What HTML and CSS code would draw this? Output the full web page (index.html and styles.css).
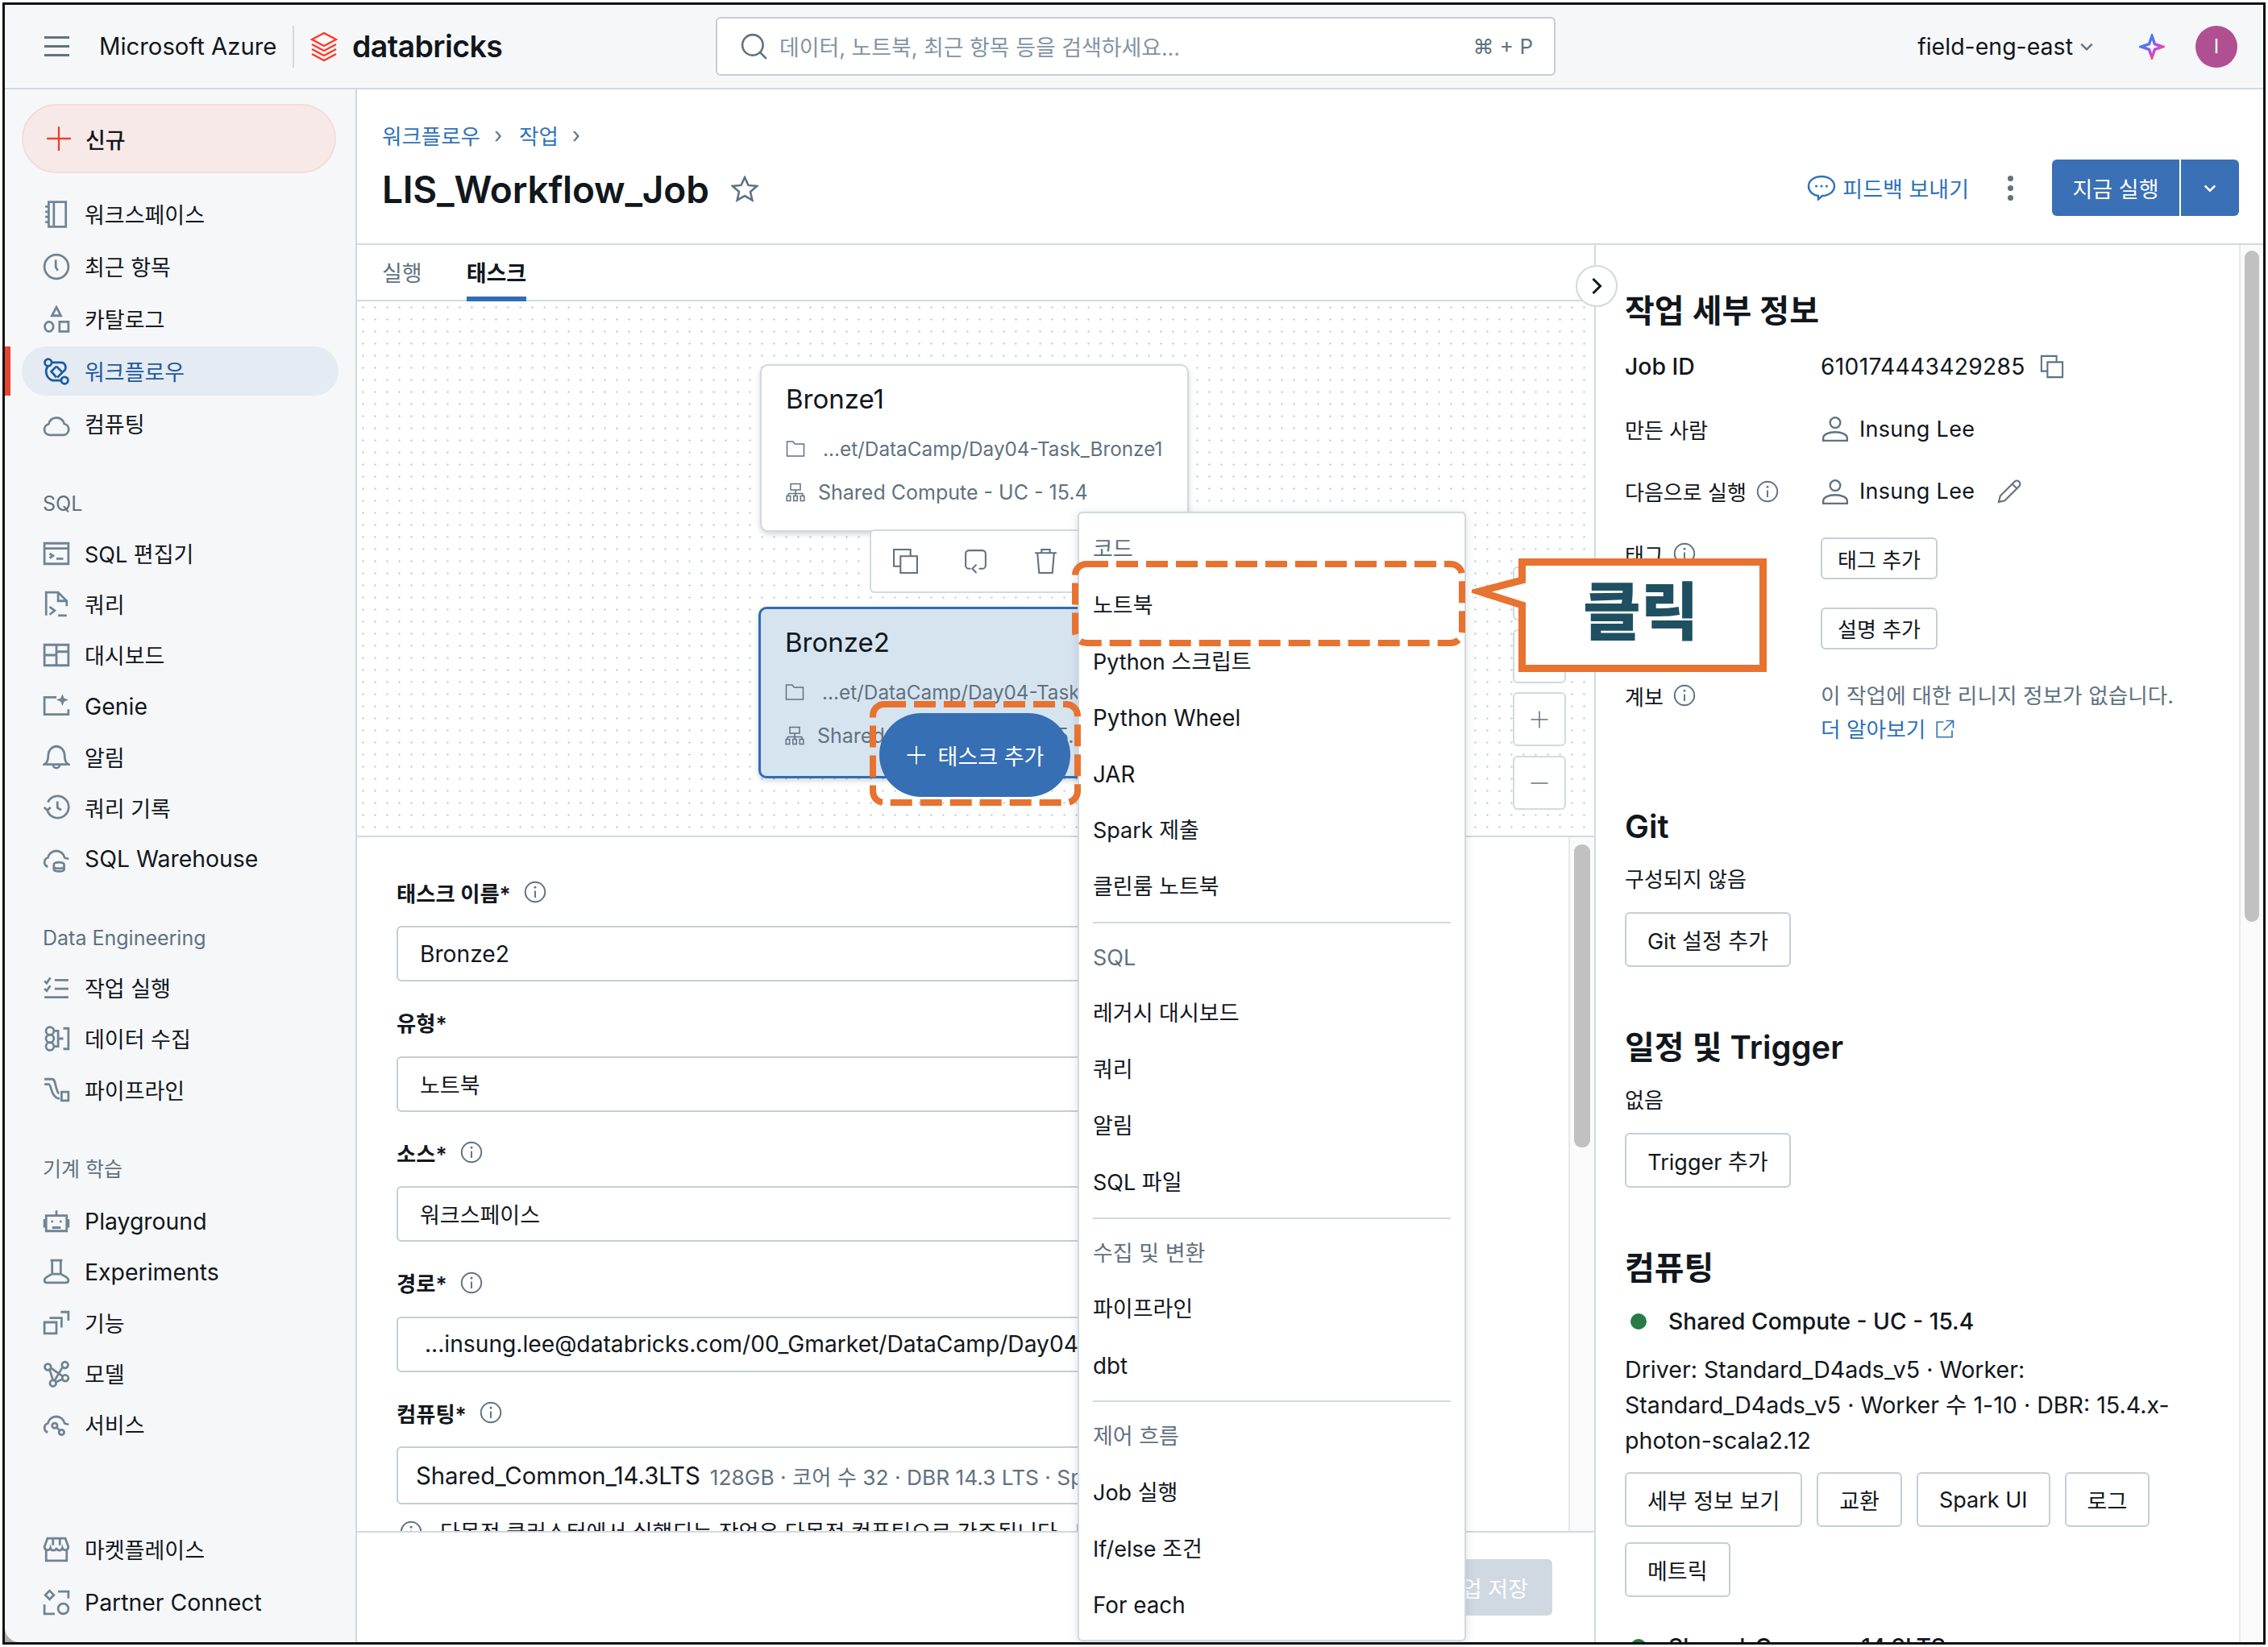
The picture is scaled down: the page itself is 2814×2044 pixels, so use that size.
FILE: index.html
```html
<!DOCTYPE html>
<html lang="ko">
  <head>
    <meta charset="UTF-8" />
    <title>LIS_Workflow_Job - Databricks</title>
    <link rel="stylesheet" href="styles.css">
  </head>
  <body>
    <svg class="sprite" width="0" height="0">
      <symbol id="i-workspace" viewBox="0 0 16 16"><path d="M3.5.8h10v14.4h-10zM6.5.8v14.4M1.5 3.5h2M1.5 6.5h2M1.5 9.5h2M1.5 12.5h2"/></symbol>
      <symbol id="i-clock" viewBox="0 0 16 16"><circle cx="8" cy="8" r="7"/><path d="M7.6 4v4.2l1.2 2"/></symbol>
      <symbol id="i-catalog" viewBox="0 0 16 16"><path d="M8 1l2.6 5H5.4zM9.8 9.6h5.2v5.6H9.800zM6.200 12.400a2.500 2.800 0 1 1-5 0a2.500 2.800 0 1 1 5 0z"/></symbol>
      <symbol id="i-flow" viewBox="0 0 16 16"><circle cx="3.200" cy="2.800" r="2"/><circle cx="12.800" cy="13.200" r="2"/><path d="M5.200 2.800H10.500a2.800 2.800 0 0 1 1.500 5.200L8.500 11.500M3.200 4.800C1.200 7 1.500 11.500 5.500 13.200H10.800M8 5l3 3M8 5L5 8l3 3.500"/></symbol>
      <symbol id="i-cloud" viewBox="0 0 16 16"><path d="M4 14.500a3.200 3.200 0 0 1-.6-6.300A4.700 4.700 0 0 1 12.600 8a3.300 3.300 0 0 1-.4 6.500z"/></symbol>
      <symbol id="i-editor" viewBox="0 0 16 16"><path d="M1 2h14v12H1zM1 5h14M4 8l2 1.300-2 1.300M8 11h4"/></symbol>
      <symbol id="i-query" viewBox="0 0 16 16"><path d="M2 14.500V1h7l5 5v3M9 1v5h5M4 9.500l3 2.200-3 2.300M9 14.500h5"/></symbol>
      <symbol id="i-dash" viewBox="0 0 16 16"><path d="M1 2h14v12H1zM8 2v12M1 8h7M8 6h7"/></symbol>
      <symbol id="i-genie" viewBox="0 0 16 16"><path d="M8 3H1v10h14v-3"/><path class="solid" d="M11.500 1l1 2.500 2.500 1-2.500 1-1 2.500-1-2.500-2.500-1 2.500-1z"/></symbol>
      <symbol id="i-bell" viewBox="0 0 16 16"><path d="M1 12.500c1.800-1 2.200-3 2.200-5a4.800 5.500 0 0 1 9.600 0c0 2 .4 4 2.200 5zM6 12.500a2 2.200 0 0 0 4 0"/></symbol>
      <symbol id="i-history" viewBox="0 0 16 16"><path d="M3 5a6.400 6.400 0 1 1-.4 4.500M.8 8l1.900 1.700L4.600 8M8.600 4.500v3.700l2.200 1.300"/></symbol>
      <symbol id="i-warehouse" viewBox="0 0 16 16"><path d="M3 12.500A2.700 2.700 0 0 1 3 7.300 5 5 0 0 1 12.800 7.300l2.400.7M6.500 11.400c0-2 6-2 6 0v2.600c0 1.700-6 1.700-6 0zM6.500 12.800c1 1 5 1 6 0"/></symbol>
      <symbol id="i-runs" viewBox="0 0 16 16"><path d="M1 4l1.300 1.200L4.500 2M1 8.500l1.300 1.200 2.200-3M7 3.500h8M7 8.500h8M1 13.500h14"/></symbol>
      <symbol id="i-ingest" viewBox="0 0 16 16"><circle cx="4.200" cy="3.500" r="2.300"/><circle cx="4.200" cy="8" r="2.300"/><circle cx="4.200" cy="12.500" r="2.300"/><path d="M6.500 3.500H9v9H6.500M9 8h3M12 2h3v12h-3"/></symbol>
      <symbol id="i-pipe" viewBox="0 0 16 16"><path d="M1 2h4.500c2.500 0 1.500 6 4 8.500M1 5h2.500c1 0 1.200 3 2.500 5.500 1 1.800 2 2.800 4 2.800M11 9.500h4v5h-4z"/></symbol>
      <symbol id="i-robot" viewBox="0 0 16 16"><path d="M2 5h12v9H2zM8 2v3M1 7v5M15 7v5M5.500 12h5"/><circle class="solid" cx="5.500" cy="8.500" r=".7"/><circle class="solid" cx="10.500" cy="8.500" r=".7"/></symbol>
      <symbol id="i-flask" viewBox="0 0 16 16"><path d="M4.500 1.500h7M5.500 1.500v7.500c0 1-4.500 2-4.500 4 0 1 .5 1.500 1.500 1.500h11c1 0 1.500-.5 1.500-1.500 0-2-4.500-3-4.500-4V1.500M5.500 9.500h5"/></symbol>
      <symbol id="i-feature" viewBox="0 0 16 16"><path d="M1 8h7v6.500H1zM4 5.500h7V11M10.500 2H15v5"/></symbol>
      <symbol id="i-model" viewBox="0 0 16 16"><circle cx="3" cy="4" r="1.800"/><circle cx="13" cy="2.800" r="1.800"/><circle cx="13.200" cy="10.500" r="1.800"/><circle cx="6" cy="13.500" r="1.800"/><path d="M4.700 4.500l7 5M4 5.500l2 6.200M11.800 3.700l-5 8.400M7.700 12.800l3.900-1.700"/></symbol>
      <symbol id="i-service" viewBox="0 0 16 16"><path d="M3 12.500A2.700 2.700 0 0 1 3 7.300 5 5 0 0 1 12.800 7.300l2.400.7"/><circle cx="7" cy="8.600" r="1.500"/><circle cx="11" cy="12.500" r="1.500"/><path d="M8.200 9.700l1.700 1.700"/></symbol>
      <symbol id="i-market" viewBox="0 0 16 16"><path d="M2 8v6.500h12V8M1 6.500L2.800 1.500h10.400L15 6.500a1.800 1.800 0 0 1-3.500.6 1.800 1.800 0 0 1-3.500 0 1.800 1.800 0 0 1-3.500 0A1.800 1.800 0 0 1 1 6.500zM6 1.500v4M10 1.500v4"/></symbol>
      <symbol id="i-partner" viewBox="0 0 16 16"><path d="M4 1l2.500 2.500L4 6 1.500 3.500zM9 1.500h6v4M1 9v5.500h6"/><circle cx="12" cy="11.500" r="3"/></symbol>
      <symbol id="i-folder" viewBox="0 0 16 16"><path d="M1 2h5l1.500 2H15v10H1z"/></symbol>
      <symbol id="i-cluster" viewBox="0 0 16 16"><path d="M4 1h8v5H4zM8 6v3M2 9h12M2 9v2M8 9v2M14 9v2M.8 11h3v4h-3zM6.500 11h3v4h-3zM12.200 11h3v4h-3z"/></symbol>
      <symbol id="i-copy" viewBox="0 0 16 16"><path d="M5 5h10v10H5zM11 5V1H1v10h4"/></symbol>
      <symbol id="i-info" viewBox="0 0 16 16"><circle cx="8" cy="8" r="7"/><path d="M8 7.200V12"/><circle class="solid" cx="8" cy="4.700" r=".8"/></symbol>
      <symbol id="i-user" viewBox="0 0 16 16"><circle cx="8" cy="4.500" r="3"/><path d="M1 15v-1.500c0-2 3-3.500 7-3.500s7 1.500 7 3.500V15z"/></symbol>
    </svg>

    <div class="window">
      <header class="topbar">
        <div class="topbar-left">
          <div class="burger"><span></span><span></span><span></span></div>
          <span class="azure">Microsoft Azure</span>
          <span class="brand-sep"></span>
          <svg class="logo" viewBox="0 0 34 37"><path d="M17 2l15 8-15 8-15-8zM2 16l15 8 15-8M2 22l15 8 15-8M2 28l15 8 15-8"/></svg>
          <span class="brand">databricks</span>
        </div>
        <div class="search">
          <svg class="search-icon" viewBox="0 0 16 16"><circle cx="7" cy="7" r="6"/><path d="M11.500 11.500L15 15"/></svg>
          <span class="search-text">데이터, 노트북, 최근 항목 등을 검색하세요...</span>
          <span class="search-key">⌘ + P</span>
        </div>
        <div class="topbar-right">
          <span class="workspace-name">field-eng-east</span>
          <svg class="caret" viewBox="0 0 16 16"><path d="M2 5l6 6 6-6"/></svg>
          <svg class="spark" viewBox="0 0 24 24"><defs><linearGradient id="sparkfill" x1="0" y1="0" x2="1" y2="1"><stop offset=".25" stop-color="#3b82f6"/><stop offset=".6" stop-color="#b84ae0"/><stop offset=".85" stop-color="#ff5470"/></linearGradient></defs><path d="M12 2l2.600 7.400L22 12l-7.400 2.600L12 22l-2.600-7.400L2 12l7.400-2.600z"/></svg>
          <span class="avatar">I</span>
        </div>
      </header>

      <div class="layout">
        <aside class="sidebar">
          <div class="new-btn"><svg viewBox="0 0 16 16"><path d="M8 1v14M1 8h14"/></svg>신규</div>

          <nav class="nav nav-main">
            <a class="nav-item"><svg class="ico"><use href="#i-workspace"/></svg>워크스페이스</a>
            <a class="nav-item"><svg class="ico"><use href="#i-clock"/></svg>최근 항목</a>
            <a class="nav-item"><svg class="ico"><use href="#i-catalog"/></svg>카탈로그</a>
            <a class="nav-item active"><svg class="ico"><use href="#i-flow"/></svg>워크플로우</a>
            <a class="nav-item"><svg class="ico"><use href="#i-cloud"/></svg>컴퓨팅</a>
          </nav>

          <div class="nav-title">SQL</div>
          <nav class="nav">
            <a class="nav-item"><svg class="ico"><use href="#i-editor"/></svg>SQL 편집기</a>
            <a class="nav-item"><svg class="ico"><use href="#i-query"/></svg>쿼리</a>
            <a class="nav-item"><svg class="ico"><use href="#i-dash"/></svg>대시보드</a>
            <a class="nav-item en"><svg class="ico"><use href="#i-genie"/></svg>Genie</a>
            <a class="nav-item"><svg class="ico"><use href="#i-bell"/></svg>알림</a>
            <a class="nav-item"><svg class="ico"><use href="#i-history"/></svg>쿼리 기록</a>
            <a class="nav-item en"><svg class="ico"><use href="#i-warehouse"/></svg>SQL Warehouse</a>
          </nav>

          <div class="nav-title">Data Engineering</div>
          <nav class="nav">
            <a class="nav-item"><svg class="ico"><use href="#i-runs"/></svg>작업 실행</a>
            <a class="nav-item"><svg class="ico"><use href="#i-ingest"/></svg>데이터 수집</a>
            <a class="nav-item"><svg class="ico"><use href="#i-pipe"/></svg>파이프라인</a>
          </nav>

          <div class="nav-title">기계 학습</div>
          <nav class="nav nav-ml">
            <a class="nav-item en"><svg class="ico"><use href="#i-robot"/></svg>Playground</a>
            <a class="nav-item en"><svg class="ico"><use href="#i-flask"/></svg>Experiments</a>
            <a class="nav-item"><svg class="ico"><use href="#i-feature"/></svg>기능</a>
            <a class="nav-item"><svg class="ico"><use href="#i-model"/></svg>모델</a>
            <a class="nav-item"><svg class="ico"><use href="#i-service"/></svg>서비스</a>
          </nav>

          <nav class="nav nav-bottom">
            <a class="nav-item"><svg class="ico"><use href="#i-market"/></svg>마켓플레이스</a>
            <a class="nav-item en"><svg class="ico"><use href="#i-partner"/></svg>Partner Connect</a>
          </nav>
        </aside>

        <main class="main">
          <section class="page-head">
            <div>
              <div class="crumbs"><a>워크플로우</a><span>›</span><a>작업</a><span>›</span></div>
              <div class="title-row">
                <h1>LIS_Workflow_Job</h1>
                <svg class="star" viewBox="0 0 16 16"><path d="M8 1l2.100 4.600 5 .5-3.800 3.300 1.100 4.900L8 11.800l-4.400 2.500 1.100-4.900L.9 6.100l5-.5z"/></svg>
              </div>
            </div>
            <div class="head-actions">
              <a class="feedback">
                <svg viewBox="0 0 18 16"><path d="M9 1c4.400 0 8 2.500 8 6s-3.600 6-7.500 6L7 15.200V13C3.500 12.500 1 10.200 1 7c0-3.500 3.600-6 8-6z"/><circle class="solid" cx="5.800" cy="7" r=".8"/><circle class="solid" cx="9" cy="7" r=".8"/><circle class="solid" cx="12.200" cy="7" r=".8"/></svg>
                피드백 보내기
              </a>
              <div class="kebab"><span></span><span></span><span></span></div>
              <div class="run-btn">
                <span class="run-label">지금 실행</span>
                <span class="run-more"><svg viewBox="0 0 16 16"><path d="M3 6l5 5 5-5"/></svg></span>
              </div>
            </div>
          </section>

          <section class="split">
            <div class="editor">
              <div class="tabs">
                <span class="tab">실행</span>
                <span class="tab selected">태스크</span>
              </div>

              <div class="canvas">
                <div class="node node-one">
                  <div class="node-name">Bronze1</div>
                  <div class="node-line node-path"><svg class="ico-sm path-ico"><use href="#i-folder"/></svg>...et/DataCamp/Day04-Task_Bronze1</div>
                  <div class="node-line"><svg class="ico-sm"><use href="#i-cluster"/></svg>Shared Compute - UC - 15.4</div>
                </div>
                <div class="node-tools">
                  <svg class="ico-md"><use href="#i-copy"/></svg>
                  <svg class="ico-md" viewBox="0 0 16 16"><path d="M5 12.500H4a2 2 0 0 1-2-2V3.500a2 2 0 0 1 2-2h8a2 2 0 0 1 2 2v7a2 2 0 0 1-2 2h-2M8.500 15L6 12.500 8.500 10"/></svg>
                  <svg class="ico-md" viewBox="0 0 16 16"><path d="M1.500 3h13M5.500 3V1h5v2M3 3l1 12h8l1-12"/></svg>
                </div>
                <div class="node node-two">
                  <div class="node-name">Bronze2</div>
                  <div class="node-line node-path"><svg class="ico-sm path-ico"><use href="#i-folder"/></svg>...et/DataCamp/Day04-Task_Bronze2</div>
                  <div class="node-line"><svg class="ico-sm"><use href="#i-cluster"/></svg>Shared Compute - UC - 15.4</div>
                </div>
                <div class="add-task"><svg viewBox="0 0 16 16"><path d="M8 1v14M1 8h14"/></svg>태스크 추가</div>
                <div class="zoom-btn zoom-a"></div>
                <div class="zoom-btn zoom-b"></div>
                <div class="zoom-btn zoom-c"><svg viewBox="0 0 16 16"><path d="M8 1v14M1 8h14"/></svg></div>
                <div class="zoom-btn zoom-d"><svg viewBox="0 0 16 16"><path d="M1 8h14"/></svg></div>
              </div>

              <div class="form-wrap">
                <div class="form">
                  <label class="field-label">태스크 이름* <svg class="info"><use href="#i-info"/></svg></label>
                  <div class="input en">Bronze2</div>
                  <label class="field-label">유형*</label>
                  <div class="input">노트북</div>
                  <label class="field-label">소스* <svg class="info"><use href="#i-info"/></svg></label>
                  <div class="input">워크스페이스</div>
                  <label class="field-label">경로* <svg class="info"><use href="#i-info"/></svg></label>
                  <div class="input input-path en">...insung.lee@databricks.com/00_Gmarket/DataCamp/Day04-Task_Bronze2</div>
                  <label class="field-label">컴퓨팅* <svg class="info"><use href="#i-info"/></svg></label>
                  <div class="input input-compute">Shared_Common_14.3LTS <span class="muted">128GB · 코어 수 32 · DBR 14.3 LTS · Spark 3.5.0</span></div>
                  <div class="form-note"><svg class="info"><use href="#i-info"/></svg>다목적 클러스터에서 실행되는 작업은 다목적 컴퓨팅으로 간주됩니다. <a>더 알아보기</a></div>
                </div>
                <div class="gutter gutter-form"><span class="thumb"></span></div>
              </div>

              <div class="form-foot"><span class="save-btn">작업 저장</span></div>
            </div>

            <div class="details-wrap">
              <div class="details">
                <h2 class="details-title">작업 세부 정보</h2>
                <div class="meta-row"><span class="meta-key en">Job ID</span><span class="meta-val en">610174443429285 <svg class="ico-xs copy"><use href="#i-copy"/></svg></span></div>
                <div class="meta-row"><span class="meta-key">만든 사람</span><span class="meta-val"><svg class="ico-user"><use href="#i-user"/></svg>Insung Lee</span></div>
                <div class="meta-row"><span class="meta-key">다음으로 실행 <svg class="info"><use href="#i-info"/></svg></span><span class="meta-val"><svg class="ico-user"><use href="#i-user"/></svg>Insung Lee <svg class="pencil" viewBox="0 0 16 16"><path d="M1 15l1-4L11.500 1.500a2 2 0 0 1 3 3L5 14zM10 3l3 3"/></svg></span></div>
                <div class="meta-row"><span class="meta-key">태그 <svg class="info"><use href="#i-info"/></svg></span><span class="meta-val"><span class="btn btn-small btn-drop">태그 추가</span></span></div>
                <div class="meta-row meta-desc"><span class="meta-key">설명</span><span class="meta-val"><span class="btn btn-small">설명 추가</span></span></div>
                <div class="meta-row meta-top">
                  <span class="meta-key">계보 <svg class="info"><use href="#i-info"/></svg></span>
                  <span class="meta-text">이 작업에 대한 리니지 정보가 없습니다.<br><a>더 알아보기 <svg class="ext" viewBox="0 0 16 16"><path d="M7 2H1.500v12.500H14V9M9 1h6v6M15 1L7 9"/></svg></a></span>
                </div>

                <h2 class="section-title git">Git</h2>
                <p class="section-text">구성되지 않음</p>
                <span class="btn btn-wide">Git 설정 추가</span>

                <h2 class="section-title">일정 및 Trigger</h2>
                <p class="section-text">없음</p>
                <span class="btn btn-wide">Trigger 추가</span>

                <h2 class="section-title">컴퓨팅</h2>
                <div class="cluster"><span class="dot"></span>Shared Compute - UC - 15.4</div>
                <p class="cluster-text">Driver: Standard_D4ads_v5 · Worker: Standard_D4ads_v5 · Worker 수 1-10 · DBR: 15.4.x-photon-scala2.12</p>
                <div class="btn-row">
                  <span class="btn">세부 정보 보기</span>
                  <span class="btn">교환</span>
                  <span class="btn">Spark UI</span>
                  <span class="btn">로그</span>
                  <span class="btn">메트릭</span>
                </div>
                <div class="cluster cluster-next"><span class="dot"></span>Shared_Common_14.3LTS</div>
              </div>
              <div class="gutter gutter-details"><span class="thumb"></span></div>
            </div>
          </section>

          <button class="collapse"><svg viewBox="0 0 16 16"><path d="M5 2l6 6-6 6"/></svg></button>
        </main>
      </div>
    </div>

    <!-- task type menu -->
    <div class="menu">
      <div class="menu-head">코드</div>
      <div class="menu-item">노트북</div>
      <div class="menu-item">Python 스크립트</div>
      <div class="menu-item en">Python Wheel</div>
      <div class="menu-item en">JAR</div>
      <div class="menu-item">Spark 제출</div>
      <div class="menu-item">클린룸 노트북</div>
      <div class="menu-line"></div>
      <div class="menu-head">SQL</div>
      <div class="menu-item">레거시 대시보드</div>
      <div class="menu-item">쿼리</div>
      <div class="menu-item">알림</div>
      <div class="menu-item">SQL 파일</div>
      <div class="menu-line"></div>
      <div class="menu-head">수집 및 변환</div>
      <div class="menu-item">파이프라인</div>
      <div class="menu-item en">dbt</div>
      <div class="menu-line"></div>
      <div class="menu-head">제어 흐름</div>
      <div class="menu-item">Job 실행</div>
      <div class="menu-item">If/else 조건</div>
      <div class="menu-item en">For each</div>
    </div>

    <!-- orange annotations on top of the screenshot -->
    <svg class="mark mark-note" viewBox="0 0 488 106"><rect x="4" y="4" width="480" height="98" rx="14"/></svg>
    <svg class="mark mark-add" viewBox="0 0 262 130"><rect x="4" y="4" width="254" height="122" rx="14"/></svg>
    <div class="callout">
      <svg viewBox="0 0 366 141"><path d="M62.500 4.500H361.500V136.500H62.500V58L9 41 62.500 27z"/></svg>
      <span>클릭</span>
    </div>
  </body>
</html>
```

FILE: styles.css
```css
* {
  box-sizing: border-box;
}
body {
  margin: 0;
  background-color: #fff;
  color: #11171c;
  font-family: Inter, "Noto Sans CJK KR", sans-serif;
  font-size: 27px;
}
a {
  color: #2f72b8;
  text-decoration: none;
}
svg {
  fill: none;
  stroke: currentColor;
  stroke-width: 1;
}
svg .solid,
.solid {
  fill: currentColor;
  stroke: none;
}
.sprite {
  position: absolute;
}
.window {
  width: 2808px;
  height: 2038px;
  margin: 3px;
  border: 3px solid #111;
  overflow: hidden;
  background-color: #aaa;
}

/* top bar */
.topbar {
  height: 105px;
  display: flex;
  align-items: center;
  background-color: #f6f7f9;
  border-bottom: 2px solid #d1d9e1;
  padding: 0 32px 0 49px;
}
.topbar-left {
  width: 833px;
  display: flex;
  align-items: center;
}
.burger {
  display: flex;
  flex-direction: column;
  gap: 8px;
  width: 31px;
  margin-right: 37px;
}
.burger span {
  height: 3px;
  background-color: #5f7281;
}
.azure {
  font-size: 29.300px;
  width: 240px;
}
.brand-sep {
  width: 2px;
  height: 52px;
  background-color: #d1d9e1;
  margin-right: 20px;
}
.logo {
  width: 34px;
  height: 37px;
  stroke: #ff3621;
  stroke-width: 2.400;
  margin-right: 18px;
}
.brand {
  font-size: 37.500px;
  font-weight: 600;
  letter-spacing: -0.6px;
}
.search {
  width: 1042px;
  height: 73px;
  display: flex;
  align-items: center;
  background-color: #fff;
  border: 2px solid #c3ced8;
  border-radius: 6px;
  padding: 0 26px 0 29px;
}
.search-icon {
  width: 34px;
  height: 36px;
  color: #5f7281;
  stroke-width: 1.200;
  margin-right: 14px;
}
.search-text {
  flex: 1;
  color: #8294a3;
  font-size: 26.900px;
}
.search-key {
  color: #5f7281;
  font-size: 26px;
}
.topbar-right {
  flex: 1;
  display: flex;
  align-items: center;
  justify-content: flex-end;
}
.workspace-name {
  font-size: 28.500px;
}
.caret {
  width: 18px;
  height: 18px;
  color: #5f7281;
  stroke-width: 2;
  margin: 0 56px 0 8px;
}
.spark {
  width: 32px;
  height: 32px;
  stroke: url(#sparkfill);
  stroke-width: 2.600;
  margin-right: 38px;
}
.avatar {
  width: 52px;
  height: 52px;
  border-radius: 50%;
  background-color: #b14f93;
  color: #fff;
  font-size: 24px;
  display: flex;
  align-items: center;
  justify-content: center;
}

.layout {
  height: 1927px;
  display: flex;
}

/* sidebar */
.sidebar {
  width: 437px;
  display: flex;
  flex-direction: column;
  background-color: #f6f7f9;
  border-right: 2px solid #d1d9e1;
  border-bottom-left-radius: 18px;
  padding: 18px 0 19px;
}
.new-btn {
  height: 86px;
  margin: 0 24px 0 21px;
  display: flex;
  align-items: center;
  gap: 16px;
  padding-left: 27px;
  background-color: #f8e9e9;
  border: 2px solid #f4dcdc;
  border-radius: 43px;
  font-size: 27px;
  font-weight: 500;
}
.new-btn svg {
  width: 34px;
  height: 34px;
  stroke: #e8432e;
  stroke-width: 1.100;
}
.nav {
  display: flex;
  flex-direction: column;
  gap: 2.200px;
  margin-top: 11px;
}
.nav-main {
  gap: 4px;
  margin-top: 20px;
  margin-bottom: 49px;
}
.nav-ml {
  margin-top: 14px;
}
.nav-bottom {
  margin-top: auto;
  gap: 5px;
}
.nav-item {
  position: relative;
  height: 61px;
  display: flex;
  align-items: center;
  gap: 18px;
  margin: 0 21px 0 21px;
  padding-left: 26px;
  border-radius: 31px;
  color: #11171c;
  font-size: 27px;
}
.nav-item.en {
  font-size: 28.400px;
}
.nav-item.active {
  background-color: #e4ebf2;
  color: #1d5ba0;
}
.nav-item.active::before {
  content: "";
  position: absolute;
  left: -21px;
  top: 0;
  width: 7px;
  height: 61px;
  background-color: #e8432e;
}
.ico {
  width: 34px;
  height: 34px;
  flex: none;
  color: #6f8494;
  stroke-width: 1.300;
}
.active .ico {
  color: #1d5ba0;
}
.nav-title {
  height: 40px;
  line-height: 40px;
  margin-left: 47px;
  color: #5f7281;
  font-size: 25px;
}
.nav + .nav-title {
  margin-top: 48px;
}
.nav-main + .nav-title {
  margin-top: 0;
}

/* main area */
.main {
  flex: 1;
  display: flex;
  flex-direction: column;
  position: relative;
  background-color: #fff;
}
.page-head {
  height: 193px;
  display: flex;
  justify-content: space-between;
  align-items: flex-start;
  border-bottom: 2px solid #d1d9e1;
  padding: 36px 30px 0 31px;
}
.crumbs {
  display: flex;
  align-items: center;
  gap: 17px;
  height: 40px;
  font-size: 26.500px;
}
.crumbs span {
  color: #5f7281;
  margin-right: 4px;
}
.title-row {
  display: flex;
  align-items: center;
  gap: 27px;
  margin-top: 18px;
  height: 60px;
}
h1 {
  margin: 0;
  font-size: 46px;
  font-weight: 600;
  letter-spacing: -0.2px;
}
.star {
  width: 34px;
  height: 34px;
  color: #5f7281;
  stroke-width: 1.200;
}
.head-actions {
  display: flex;
  align-items: center;
  margin-top: 51px;
}
.feedback {
  display: flex;
  align-items: center;
  gap: 8px;
  font-size: 27px;
}
.feedback svg {
  width: 36px;
  height: 32px;
  stroke-width: 1.200;
}
.kebab {
  display: flex;
  flex-direction: column;
  gap: 5px;
  margin: 0 48px 0 48px;
}
.kebab span {
  width: 7px;
  height: 7px;
  border-radius: 50%;
  background-color: #5f7281;
}
.run-btn {
  width: 232px;
  height: 70px;
  display: flex;
  background-color: #3a70b5;
  border-radius: 6px;
  color: #fff;
}
.run-label {
  width: 160px;
  display: flex;
  align-items: center;
  justify-content: center;
  border-right: 2px solid #fff;
  font-size: 27px;
}
.run-more {
  flex: 1;
  display: flex;
  align-items: center;
  justify-content: center;
}
.run-more svg {
  width: 20px;
  height: 20px;
  stroke-width: 2;
}

.split {
  flex: 1;
  min-height: 0;
  display: flex;
}
.editor {
  width: 1537px;
  display: flex;
  flex-direction: column;
  border-right: 2px solid #d1d9e1;
}
.tabs {
  height: 70px;
  display: flex;
  gap: 55px;
  padding: 0 31px;
  border-bottom: 2px solid #d1d9e1;
}
.tab {
  height: 70px;
  line-height: 72px;
  color: #5f7281;
  font-size: 27px;
}
.tab.selected {
  color: #11171c;
  font-weight: 600;
  border-bottom: 6px solid #2f6db5;
}

/* job graph, the nodes are placed freely on it */
.canvas {
  position: relative;
  height: 665px;
  flex: none;
  background-color: #fff;
  background-image: radial-gradient(#c8d2dc 1.200px, transparent 1.300px);
  background-size: 15px 15px;
  border-bottom: 2px solid #d1d9e1;
}
.node {
  position: absolute;
  width: 532px;
  padding: 20px 10px 0 30px;
  background-color: #fff;
  border: 2px solid #d1d9e1;
  border-radius: 10px;
  box-shadow: 0 3px 6px rgba(70, 90, 110, 0.25);
}
.node-one {
  left: 500px;
  top: 78px;
  height: 208px;
}
.node-two {
  left: 498px;
  top: 379px;
  height: 213px;
  width: 540px;
  background-color: #d6e4f0;
  border: 3px solid #2f6db5;
}
.node-name {
  font-size: 33px;
  height: 42px;
  line-height: 42px;
  margin-bottom: 14px;
}
.node-line {
  display: flex;
  align-items: center;
  height: 54px;
  color: #5f7281;
  font-size: 25px;
  white-space: nowrap;
  overflow: hidden;
}
.node-path {
  font-size: 24.300px;
}
.ico-sm {
  width: 24px;
  height: 24px;
  flex: none;
  margin-right: 16px;
  stroke-width: 1;
}
.path-ico {
  margin-right: 22px;
}
.node-tools {
  position: absolute;
  left: 636px;
  top: 283px;
  width: 280px;
  height: 79px;
  display: flex;
  align-items: center;
  gap: 54px;
  padding-left: 26px;
  background-color: #fff;
  border: 2px solid #d1d9e1;
  border-radius: 6px;
  color: #5f7281;
}
.ico-md {
  width: 33px;
  height: 33px;
  flex: none;
  stroke-width: 1;
}
.add-task {
  position: absolute;
  left: 648px;
  top: 511px;
  width: 237px;
  height: 104px;
  display: flex;
  align-items: center;
  justify-content: center;
  gap: 14px;
  background-color: #376fb4;
  border-radius: 52px;
  color: #fff;
  font-size: 27px;
}
.add-task svg {
  width: 26px;
  height: 26px;
  stroke-width: 1.100;
}
.zoom-btn {
  position: absolute;
  left: 1434px;
  width: 66px;
  height: 67px;
  display: flex;
  align-items: center;
  justify-content: center;
  background-color: #fff;
  border: 2px solid #d1d9e1;
  border-radius: 6px;
  color: #5f7281;
}
.zoom-btn svg {
  width: 24px;
  height: 24px;
  stroke-width: 1;
}
.zoom-a {
  top: 329px;
}
.zoom-b {
  top: 407px;
}
.zoom-c {
  top: 485px;
}
.zoom-d {
  top: 564px;
}

/* task form */
.form-wrap {
  flex: 1;
  min-height: 0;
  display: flex;
  overflow: hidden;
}
.form {
  flex: 1;
  min-width: 0;
  padding: 48px 170px 0 49px;
  overflow: hidden;
}
.field-label {
  height: 40px;
  display: flex;
  align-items: center;
  gap: 16px;
  font-size: 26.300px;
  font-weight: 600;
}
.info {
  width: 28px;
  height: 28px;
  flex: none;
  color: #5f7281;
  stroke-width: 1.100;
}
.input {
  height: 69px;
  margin: 22px 0 30.500px;
  display: flex;
  align-items: center;
  padding-left: 27px;
  border: 2px solid #c3ced8;
  border-radius: 6px;
  font-size: 27px;
  white-space: nowrap;
  overflow: hidden;
}
.input.en {
  font-size: 28.200px;
}
.input-path {
  padding-left: 33px;
}
.input-compute {
  height: 72px;
  margin-bottom: 0;
  padding-left: 22px;
  gap: 12px;
  font-size: 29.300px;
}
.muted {
  color: #5f7281;
  font-size: 26.300px;
}
.form-note {
  display: flex;
  align-items: center;
  gap: 22px;
  margin-top: 14px;
  padding-left: 4px;
  font-size: 27px;
  color: #11171c;
  white-space: nowrap;
}
.form-note a {
  margin-left: -8px;
}
.form-foot {
  height: 138px;
  flex: none;
  display: flex;
  justify-content: flex-end;
  align-items: center;
  border-top: 2px solid #d1d9e1;
  padding-right: 52px;
}
.save-btn {
  width: 240px;
  height: 70px;
  display: flex;
  align-items: center;
  justify-content: flex-end;
  padding-right: 30px;
  background-color: #d0d9e2;
  border-radius: 6px;
  color: #fff;
  font-size: 27px;
}
.gutter {
  flex: none;
  background-color: #fafafa;
  border-left: 2px solid #e6e8ea;
}
.gutter-form {
  width: 32px;
  padding: 9px 5px 0;
}
.gutter-details {
  width: 30px;
  padding: 7px 5px 0;
}
.thumb {
  display: block;
  border-radius: 9px;
  background-color: #c1c1c1;
}
.gutter-form .thumb {
  height: 376px;
}
.gutter-details .thumb {
  height: 833px;
}

/* right details panel */
.details-wrap {
  flex: 1;
  min-width: 0;
  display: flex;
  overflow: hidden;
}
.details {
  flex: 1;
  min-width: 0;
  padding: 57px 30px 0 36px;
  overflow: hidden;
}
.details-title {
  height: 50px;
  line-height: 50px;
  margin: 0 0 5px;
  font-size: 40px;
  font-weight: 600;
}
.meta-row {
  height: 77.500px;
  display: grid;
  grid-template-columns: 243px 1fr;
  align-items: center;
}
.meta-key {
  display: flex;
  align-items: center;
  gap: 12px;
  font-size: 26px;
}
.meta-key.en {
  font-size: 28.400px;
  font-weight: 500;
}
.meta-val {
  display: flex;
  align-items: center;
  font-size: 27px;
  letter-spacing: 0.300px;
}
.meta-val.en {
  font-size: 28.200px;
}
.meta-desc {
  height: 107px;
}
.meta-top {
  align-items: start;
  height: 93px;
  padding-top: 9px;
}
.meta-top .meta-key {
  height: 42px;
}
.meta-text {
  color: #5f7281;
  font-size: 26.700px;
  line-height: 42px;
}
.ico-xs {
  width: 30px;
  height: 30px;
  color: #5f7281;
  margin-left: 18px;
  stroke-width: 1.100;
}
.ico-user {
  width: 36px;
  height: 34px;
  color: #5f7281;
  margin-right: 12px;
  stroke-width: 1.100;
}
.pencil {
  width: 30px;
  height: 30px;
  color: #5f7281;
  margin-left: 28px;
  stroke-width: 1.100;
}
.ext {
  width: 24px;
  height: 24px;
  margin-left: 4px;
  vertical-align: -2px;
  stroke-width: 1.100;
}
.btn {
  display: inline-flex;
  align-items: center;
  justify-content: center;
  height: 68px;
  padding: 0 26px;
  background-color: #fff;
  border: 2px solid #c3ced8;
  border-radius: 6px;
  font-size: 27px;
  letter-spacing: 0;
}
.btn-small {
  height: 52px;
  padding: 0 19px;
  font-size: 26px;
}
.btn-drop {
  margin-top: 12px;
}
.btn-wide {
  width: 206px;
  padding: 0;
}
.section-title {
  height: 50px;
  line-height: 50px;
  margin: 75px 0 0;
  font-size: 40px;
  font-weight: 600;
}
.section-title.git {
  margin-top: 75px;
}
.section-text {
  height: 40px;
  line-height: 40px;
  margin: 21px 0 20px;
  font-size: 26px;
}
.cluster {
  height: 40px;
  display: flex;
  align-items: center;
  margin-top: 21px;
  font-size: 28.200px;
  font-weight: 500;
}
.cluster-next {
  margin-top: 42px;
}
.dot {
  width: 20px;
  height: 20px;
  margin: 0 27px 0 7px;
  border-radius: 50%;
  background-color: #277c43;
}
.cluster-text {
  margin: 18px 0 17px;
  font-size: 28.600px;
  line-height: 44px;
  color: #11171c;
}
.btn-row {
  display: flex;
  flex-wrap: wrap;
  gap: 19px 18px;
}
.collapse {
  position: absolute;
  left: 1512px;
  top: 218px;
  width: 52px;
  height: 52px;
  padding: 0;
  display: flex;
  align-items: center;
  justify-content: center;
  background-color: #fff;
  border: 2px solid #d1d9e1;
  border-radius: 50%;
  color: #11171c;
}
.collapse svg {
  width: 24px;
  height: 24px;
  stroke-width: 2;
}

/* dropdown */
.menu {
  position: absolute;
  left: 1337px;
  top: 635px;
  width: 482px;
  height: 1402px;
  padding: 10px 17px;
  background-color: #fff;
  border: 2px solid #d1d9e1;
  border-radius: 6px;
  box-shadow: 0 2px 12px rgba(70, 90, 110, 0.2);
}
.menu-head,
.menu-item {
  height: 69.800px;
  line-height: 70px;
  font-size: 27px;
}
.menu-item.en {
  font-size: 27.800px;
}
.menu-head {
  color: #5f7281;
}
.menu-line {
  height: 2px;
  margin: 8px 0;
  background-color: #d1d9e1;
}

/* annotations */
.mark {
  position: absolute;
  fill: none;
  stroke: #e8722f;
  stroke-width: 8;
  stroke-dasharray: 27 10;
}
.mark-note {
  left: 1330px;
  top: 696px;
  width: 488px;
  height: 106px;
}
.mark-add {
  left: 1079px;
  top: 870px;
  width: 262px;
  height: 130px;
}
.callout {
  position: absolute;
  left: 1826px;
  top: 693px;
  width: 366px;
  height: 141px;
}
.callout svg {
  position: absolute;
  left: 0;
  top: 0;
  width: 366px;
  height: 141px;
  fill: #fff;
  stroke: #e8722f;
  stroke-width: 9;
}
.callout span {
  position: absolute;
  left: 138px;
  top: 17px;
  color: #1f5062;
  font-size: 78px;
  font-weight: 800;
  line-height: 100px;
}
```
